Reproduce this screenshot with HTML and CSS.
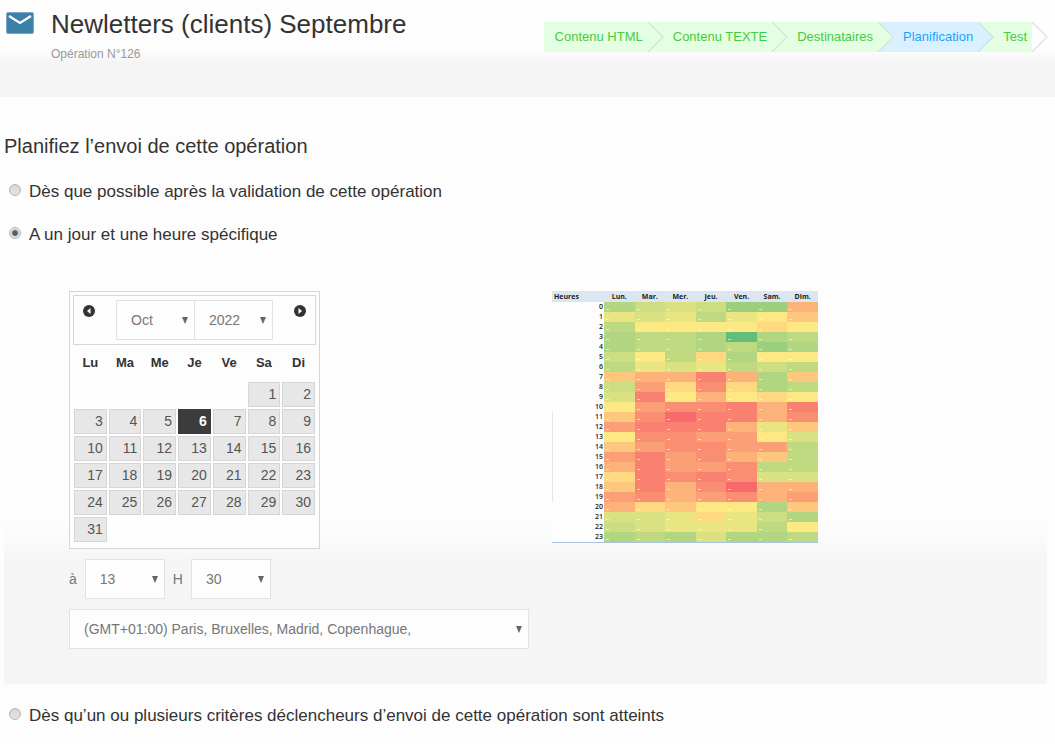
FILE: index.html
```html
<!DOCTYPE html>
<html lang="fr">
<head>
    <meta charset="UTF-8">
    <meta name="viewport" content="width=device-width, initial-scale=1.0">
    <title>Planification de l’opération</title>
    <link rel="stylesheet" href="styles.css">
</head>
<body>
    <header class="page-header">
        <svg class="mail-icon" viewBox="0 0 28 22" aria-hidden="true">
            <rect x="0.5" y="0.5" width="27" height="21" rx="1.5" fill="#3a80a8" stroke="#7fa9c2"/>
            <path d="M3 4l11 7 11-7" fill="none" stroke="#fff" stroke-width="2.2"/>
        </svg>
        <div class="page-title">
            <h1>Newletters (clients) Septembre</h1>
            <p>Opération N°126</p>
        </div>
        <ol class="steps">
            <li class="step"><a href="#html">Contenu HTML</a><svg class="chevron" viewBox="0 0 16 30"><path d="M0 0l15 15L0 30"/></svg></li>
            <li class="step"><a href="#texte">Contenu TEXTE</a><svg class="chevron" viewBox="0 0 16 30"><path d="M0 0l15 15L0 30"/></svg></li>
            <li class="step"><a href="#destinataires">Destinataires</a><svg class="chevron" viewBox="0 0 16 30"><path d="M0 0l15 15L0 30"/></svg></li>
            <li class="step current"><a href="#planification">Planification</a><svg class="chevron" viewBox="0 0 16 30"><path d="M0 0l15 15L0 30"/></svg></li>
            <li class="step last"><a href="#test">Test</a><svg class="chevron" viewBox="0 0 16 30"><path d="M0 0l15 15L0 30"/></svg></li>
        </ol>
    </header>

    <main class="content">
        <h2>Planifiez l’envoi de cette opération</h2>

        <div class="choice">
            <input type="radio" name="mode" id="mode-asap">
            <label for="mode-asap">Dès que possible après la validation de cette opération</label>
        </div>
        <div class="choice">
            <input type="radio" name="mode" id="mode-date" checked>
            <label for="mode-date">A un jour et une heure spécifique</label>
        </div>

        <section class="panel">
            <div class="schedule">
                <div class="calendar">
                    <div class="calendar-header">
                        <button type="button" class="nav" aria-label="Mois précédent">
                            <svg viewBox="0 0 12 12"><circle cx="6" cy="6" r="6"/><path d="M7.5 3v6L4 6z"/></svg>
                        </button>
                        <div class="month-year">
                            <select aria-label="Mois"><option>Oct</option></select>
                            <select aria-label="Année"><option>2022</option></select>
                        </div>
                        <button type="button" class="nav" aria-label="Mois suivant">
                            <svg viewBox="0 0 12 12"><circle cx="6" cy="6" r="6"/><path d="M4.5 3v6L8 6z"/></svg>
                        </button>
                    </div>
                    <table class="days">
                        <thead>
                            <tr><th>Lu</th><th>Ma</th><th>Me</th><th>Je</th><th>Ve</th><th>Sa</th><th>Di</th></tr>
                        </thead>
                        <tbody id="days"></tbody>
                    </table>
                </div>
                <div class="time">
                    <label for="hour">à</label>
                    <select id="hour"><option>13</option></select>
                    <label for="minute">H</label>
                    <select id="minute"><option>30</option></select>
                </div>
                <select class="timezone" aria-label="Fuseau horaire">
                    <option>(GMT+01:00) Paris, Bruxelles, Madrid, Copenhague,</option>
                </select>
            </div>
            <table class="heatmap">
                <thead>
                    <tr><th class="hours">Heures</th><th>Lun.</th><th>Mar.</th><th>Mer.</th><th>Jeu.</th><th>Ven.</th><th>Sam.</th><th>Dim.</th></tr>
                </thead>
                <tbody id="heatmap"></tbody>
            </table>
        </section>

        <div class="choice">
            <input type="radio" name="mode" id="mode-trigger">
            <label for="mode-trigger">Dès qu’un ou plusieurs critères déclencheurs d’envoi de cette opération sont atteints</label>
        </div>
    </main>

    <script src="script.js"></script>
</body>
</html>
```

FILE: styles.css
```css
* {
    box-sizing: border-box;
}
body {
    margin: 0;
    background-color: #fdfdfd;
    color: #333;
    font-family: "Liberation Sans", Arial, sans-serif;
    font-size: 14px;
}
h1, h2, p, ol {
    margin: 0;
    padding: 0;
    font-weight: normal;
}

/* Header */
.page-header {
    display: flex;
    align-items: flex-start;
    height: 97px;
    padding: 8px 23px 0 6px;
    background: linear-gradient(#fdfdfd 50px, #f5f5f5 62px);
}
.mail-icon {
    width: 28px;
    height: 22px;
    margin-top: 4px;
}
.page-title {
    flex: 1;
    padding-left: 17px;
}
.page-title h1 {
    font-size: 26px;
    line-height: 32px;
}
.page-title p {
    padding-top: 6px;
    color: #999;
    font-size: 12px;
    line-height: 16px;
}
.steps {
    display: flex;
    margin-top: 14px;
    list-style: none;
}
.step {
    position: relative;
    height: 30px;
    padding: 0 5px 0 25px;
    background-color: #e4fee1;
    font-size: 13px;
    line-height: 29px;
    white-space: nowrap;
}
.step:first-child {
    padding-left: 11px;
}
.step a {
    color: #4c4;
    text-decoration: none;
}
.step.current {
    background-color: #d9f1ff;
}
.step.current a {
    color: #19a3ff;
}
.chevron {
    position: absolute;
    top: 0;
    left: 100%;
    z-index: 1;
    width: 16px;
    height: 30px;
    fill: #e4fee1;
    stroke: #d6e8d4;
    stroke-width: 1.5;
}
.current .chevron {
    fill: #d9f1ff;
    stroke: #cfe3ea;
}
.last .chevron {
    fill: #fdfdfd;
    stroke: #e2e2e2;
}

/* Content */
.content {
    padding: 35px 8px 0 4px;
}
h2 {
    margin-bottom: 22px;
    font-size: 20px;
    line-height: 28px;
}
.choice {
    display: flex;
    align-items: center;
    gap: 8px;
    height: 19px;
    margin-bottom: 24px;
    padding-left: 5px;
    font-size: 17px;
}
.choice input {
    appearance: none;
    width: 12px;
    height: 12px;
    margin: 0 0 3px;
    border: 1px solid #b4b4b4;
    border-radius: 50%;
    background: linear-gradient(#d6d6d6, #e4e4e4);
}
.choice input:checked {
    background: radial-gradient(circle, #555a63 2px, #e6e6e6 4px);
}
select {
    appearance: none;
    width: 80px;
    height: 40px;
    padding: 0 14px;
    border: 1px solid #e2e2e2;
    border-radius: 0;
    background: #fdfdfd url("data:image/svg+xml,%3Csvg xmlns='http://www.w3.org/2000/svg' width='6' height='7'%3E%3Cpath d='M0 0h6L3 7z' fill='%23666'/%3E%3C/svg%3E") no-repeat right 6px center;
    color: #777;
    font-family: inherit;
    font-size: 14px;
}

.panel {
    display: flex;
    align-items: flex-start;
    gap: 23px;
    margin-bottom: 22px;
    padding: 23px 0 35px 65px;
    background: linear-gradient(to top, #f5f5f5 122px, #fdfdfd 160px);
}
.schedule {
    width: 460px;
}

/* Calendar */
.calendar {
    width: 251px;
    padding: 3px 3px 5px;
    border: 1px solid #d6d6d6;
    background-color: #fdfdfd;
}
.calendar-header {
    display: flex;
    align-items: flex-start;
    justify-content: space-between;
    height: 50px;
    padding: 4px 9px;
    border: 1px solid #d6d6d6;
}
.month-year {
    display: flex;
}
.month-year select {
    width: 79px;
}
.month-year select + select {
    margin-left: -1px;
}
.nav {
    height: 12px;
    margin-top: 5px;
    padding: 0;
    border: 0;
    background: none;
}
.nav svg {
    display: block;
    width: 12px;
    height: 12px;
    fill: #333;
}
.nav path {
    fill: #fff;
}
.days {
    width: 100%;
    border-collapse: collapse;
    table-layout: fixed;
}
.days th {
    height: 36px;
    padding: 0 0 2px;
    font-size: 13px;
}
.days td {
    padding: 1px;
}
.days a {
    display: block;
    height: 25px;
    padding-right: 3px;
    border: 1px solid #d6d6d6;
    background-color: #e7e7e7;
    color: #555;
    line-height: 23px;
    text-align: right;
    text-decoration: none;
}
.days a.selected {
    border-color: #3c3c3c;
    background-color: #3c3c3c;
    color: #fff;
    font-weight: bold;
}

.time {
    display: flex;
    align-items: center;
    gap: 8px;
    margin: 10px 0;
    color: #777;
}
.timezone {
    display: block;
    width: 100%;
}

/* Heatmap */
.heatmap {
    width: 266px;
    border-bottom: 1px solid #a9c4dc;
    border-collapse: collapse;
    table-layout: fixed;
    background-color: #fdfdfd;
    color: #222;
    font-family: "Open Sans", sans-serif;
    font-size: 7px;
    line-height: 10px;
}
.heatmap th,
.heatmap td {
    height: 10px;
    padding: 0;
}
.heatmap thead th {
    height: 11px;
    background-color: #dbe6f0;
    font-weight: bold;
}
.heatmap .hours {
    width: 52px;
    padding-left: 2px;
    text-align: left;
}
.heatmap tbody th {
    padding-right: 1px;
    font-weight: 600;
    text-align: right;
}
.heatmap .marked {
    background: linear-gradient(#e6e6e6, #e6e6e6) no-repeat left / 1px 100%;
}
/* small white tick in the corner of each slot */
.heatmap td {
    background-image: linear-gradient(#ffffff99, #ffffff99);
    background-position: 2px 7px;
    background-repeat: no-repeat;
    background-size: 3px 1px;
}
```

FILE: script.js
```js
// Calendar: October 2022 starts on a Saturday
const FIRST_COLUMN = 5;
const DAY_COUNT = 31;
const SELECTED_DAY = 6;

function renderDays() {
    const body = document.getElementById('days');
    let row;
    for (let i = 0; i < FIRST_COLUMN + DAY_COUNT; i++) {
        if (i % 7 === 0) {
            row = body.insertRow();
        }
        const cell = row.insertCell();
        const day = i - FIRST_COLUMN + 1;
        if (day < 1) {
            continue;
        }
        const link = document.createElement('a');
        link.href = '#';
        link.textContent = day;
        if (day === SELECTED_DAY) {
            link.className = 'selected';
        }
        cell.appendChild(link);
    }
}

// Heatmap: one letter per day, from quiet (a) to busy (o)
const COLORS = {
    a: '#65bd7a', b: '#9bcf7d', c: '#b1d580', d: '#bfd980', e: '#cddd81',
    f: '#dae182', g: '#eae583', h: '#fde983', i: '#fed981', j: '#fdc77d',
    k: '#fcb279', l: '#fb9f76', m: '#fa8e72', n: '#f98170', o: '#f8696b'
};
const HOURS = [
    'cefebbk', 'gfgdghj', 'dhhhhih', 'cddcacd', 'cddcdbc', 'ehdichh',
    'dgfgded', 'jkknkcj', 'elimicd', 'fnhkhih', 'hlmmnkn', 'jmonnkm',
    'lnnnkgj', 'hmmllhf', 'jlmmlld', 'lnlmkjd', 'knllmdd', 'inmnmff',
    'jnkmokk', 'lmklmkl', 'kijhhcj', 'ffgigec', 'efgggdh', 'cdcfccd'
];

function renderHeatmap() {
    const body = document.getElementById('heatmap');
    HOURS.forEach((levels, hour) => {
        const row = body.insertRow();
        const head = document.createElement('th');
        head.textContent = hour;
        if (hour > 10 && hour < 20) {
            head.className = 'marked';
        }
        row.appendChild(head);
        for (const level of levels) {
            row.insertCell().style.backgroundColor = COLORS[level];
        }
    });
}

renderDays();
renderHeatmap();
```
